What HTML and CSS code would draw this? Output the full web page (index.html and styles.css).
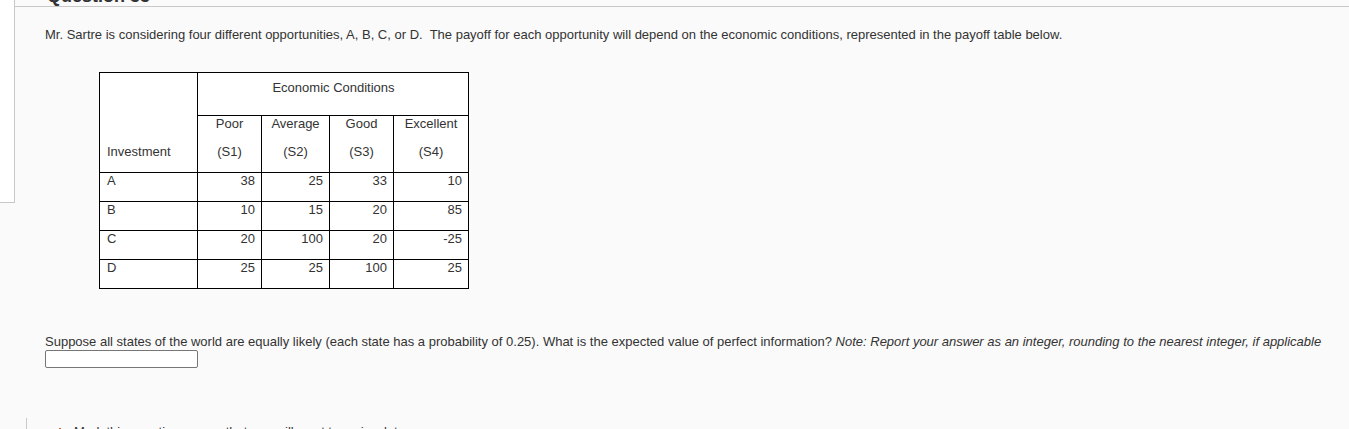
FILE: index.html
```html
<!DOCTYPE html>
<html>
<head>
<meta charset="utf-8">
<link rel="stylesheet" href="styles.css">
</head>
<body>
<div class="page">
  <h2 class="qtitle">Question 33</h2>
  <div class="question">
    <div class="side"></div>
    <div class="content">
      <p class="intro">Mr. Sartre is considering four different opportunities, A, B, C, or D.&nbsp; The payoff for each opportunity will depend on the economic conditions, represented in the payoff table below.</p>
      <table class="payoff">
        <colgroup>
          <col class="c1"><col class="c2"><col class="c3"><col class="c4"><col class="c5">
        </colgroup>
        <tr class="r1">
          <td rowspan="2" class="inv">Investment</td>
          <td colspan="4" class="econ">Economic Conditions</td>
        </tr>
        <tr class="r2">
          <td class="st">Poor<br><br>(S1)</td>
          <td class="st">Average<br><br>(S2)</td>
          <td class="st">Good<br><br>(S3)</td>
          <td class="st">Excellent<br><br>(S4)</td>
        </tr>
        <tr class="row"><td class="lbl">A</td><td class="num">38</td><td class="num">25</td><td class="num">33</td><td class="num">10</td></tr>
        <tr class="row"><td class="lbl">B</td><td class="num">10</td><td class="num">15</td><td class="num">20</td><td class="num">85</td></tr>
        <tr class="row"><td class="lbl">C</td><td class="num">20</td><td class="num">100</td><td class="num">20</td><td class="num">-25</td></tr>
        <tr class="row"><td class="lbl">D</td><td class="num">25</td><td class="num">25</td><td class="num">100</td><td class="num">25</td></tr>
      </table>
      <p class="ask">Suppose all states of the world are equally likely (each state has a probability of 0.25). What is the expected value of perfect information? <em>Note: Report your answer as an integer, rounding to the nearest integer, if applicable</em></p>
      <input class="answer" type="text">
    </div>
  </div>
  <div class="next">
    <span class="arrow">&#9656;</span>
    <svg class="flag" width="8" height="10" viewBox="0 0 8 10"><path d="M4 1 L7 5 L4 9 L1 5 Z" fill="#e8a317" stroke="#d9541e" stroke-width="1"/></svg>
    <span class="ntext">Mark this question as one that you will want to review later</span>
  </div>
</div>
</body>
</html>
```

FILE: styles.css
```css
html, body {
  margin: 0;
  padding: 0;
  background: #fafafa;
  overflow: hidden;
}
body {
  font-family: "Liberation Sans", Arial, sans-serif;
  font-size: 13px;
  color: #333;
}
.page {
  margin-top: -13px;
}
.qtitle {
  margin: 0 0 0 47px;
  font-size: 18px;
  line-height: 18px;
  font-weight: bold;
  color: #333;
  height: 19px;
}
.question {
  display: flex;
}
.side {
  width: 14px;
  height: 215px;
  background: #fff;
  border-right: 1px solid #c8c8c8;
  border-bottom: 1px solid #c8c8c8;
  margin-top: -19px;
  flex: none;
}
.content {
  flex: 1;
  border-top: 1px solid #c8c8c8;
  padding-left: 30px;
}
.intro {
  margin: 21px 0 0 0;
  line-height: 14px;
}
.payoff {
  margin: 30px 0 0 54px;
  border-collapse: collapse;
  table-layout: fixed;
  width: 369px;
}
.c1 { width: 98px; }
.c2 { width: 64px; }
.c3 { width: 68px; }
.c4 { width: 64px; }
.c5 { width: 75px; }
.payoff td {
  border: 1px solid #000;
  line-height: 14px;
  padding: 1px 6px 0 7px;
  vertical-align: top;
  background: #fff;
  font-size: 13px;
}
.r1 { height: 43px; }
.r2 { height: 57px; }
.row { height: 29px; }
.payoff td.inv {
  vertical-align: bottom;
  padding-bottom: 13px;
}
.payoff td.econ {
  text-align: center;
  padding-top: 8px;
}
.payoff td.st {
  text-align: center;
  padding-left: 2px;
  padding-right: 2px;
}
.payoff td.num {
  text-align: right;
  padding-right: 6px;
}
.ask {
  margin: 46px 0 0 0;
  line-height: 14px;
}
.ask em {
  font-style: italic;
}
.answer {
  display: block;
  margin: 1px 0 0 0;
  width: 153px;
  height: 18px;
  box-sizing: border-box;
  border: 1px solid #767676;
  border-radius: 2px;
  background: #fff;
  padding: 0;
}
.next {
  margin: 50px 0 0 26px;
  border-left: 1px solid #c8c8c8;
  height: 40px;
  padding-top: 7px;
  padding-left: 8px;
  display: flex;
  align-items: flex-start;
  gap: 10px;
  font-size: 13px;
  line-height: 14px;
}
.arrow {
  color: #999;
  font-size: 9px;
}
.flag {
  margin-left: 6px;
  margin-top: 2px;
}
.ntext {
  color: #333;
}
```
